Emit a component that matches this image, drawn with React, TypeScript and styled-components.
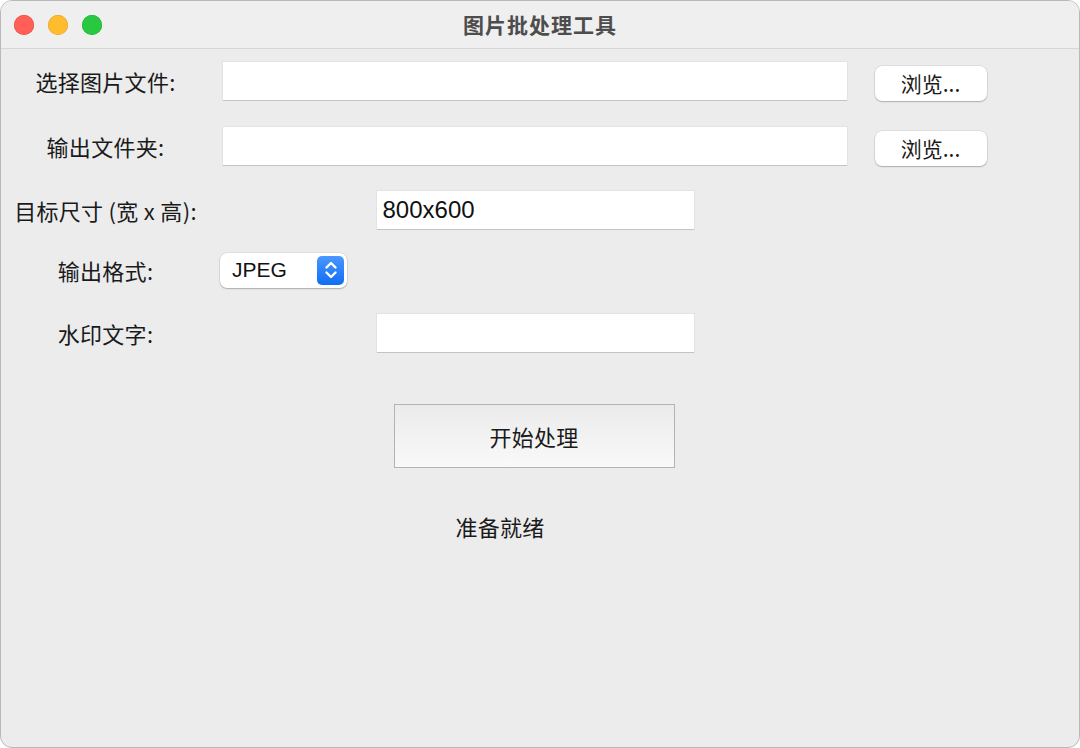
import React from "react";
import styled, { createGlobalStyle } from "styled-components";

const Global = createGlobalStyle`
  html, body { margin: 0; padding: 0; background: #ffffff; }
  body { font-family: "Noto Sans CJK SC", "Noto Sans", sans-serif; }
  * { box-sizing: border-box; }
`;

const Window = styled.div`
  width: 1080px;
  height: 748px;
  border-radius: 12px;
  border: 1px solid #b9b9b9;
  background: #ececec;
  overflow: hidden;
  display: flex;
  flex-direction: column;
`;

const TitleBar = styled.div`
  height: 48px;
  flex: none;
  background: #efefef;
  border-bottom: 1px solid #d6d6d6;
  display: flex;
  align-items: center;
  position: relative;
  padding-left: 13px;
`;

const Lights = styled.div`
  display: flex;
  gap: 14px;
`;

const Light = styled.span<{ $c: string; $b: string }>`
  width: 20px;
  height: 20px;
  border-radius: 50%;
  background: ${(p) => p.$c};
  box-shadow: inset 0 0 0 0.5px ${(p) => p.$b};
`;

const Title = styled.div`
  position: absolute;
  left: 0;
  right: 0;
  text-align: center;
  font-size: 21px;
  font-weight: 700;
  color: #4d4d4d;
  line-height: 1;
  letter-spacing: 1px;
  pointer-events: none;
`;

const Form = styled.div`
  display: grid;
  grid-template-columns: 209px 624px 141px;
  grid-template-rows: 50px 80px 48px 72px 54px;
  column-gap: 13px;
  padding-top: 7px;
  align-items: center;
`;

const Label = styled.div`
  font-size: 22px;
  line-height: 1;
  color: #1a1a1a;
  text-align: center;
  white-space: nowrap;
  letter-spacing: 0.3px;
`;

const Entry = styled.div<{ $narrow?: boolean }>`
  height: 38px;
  background: #ffffff;
  box-shadow: 0 1px 0 #c4c4c4, 0 0 0 1px #e3e3e3;
  width: ${(p) => (p.$narrow ? "317px" : "624px")};
  justify-self: center;
  display: flex;
  align-items: center;
  padding-left: 6px;
  font-family: "Liberation Sans", "Noto Sans CJK SC", sans-serif;
  font-size: 24px;
  color: #111;
`;

const BrowseButton = styled.button`
  justify-self: center;
  width: 112px;
  height: 35px;
  margin-top: 5px;
  border: none;
  border-radius: 7px;
  background: #ffffff;
  box-shadow: 0 1px 1.5px rgba(0, 0, 0, 0.22), 0 0 0 0.5px rgba(0, 0, 0, 0.12);
  font-family: "Noto Sans CJK SC", sans-serif;
  font-size: 21px;
  color: #1a1a1a;
  padding: 0;
  line-height: 1;
`;

const Combo = styled.div`
  justify-self: start;
  margin-left: -3px;
  width: 127px;
  height: 35px;
  background: #ffffff;
  border-radius: 7px;
  box-shadow: 0 1px 1.5px rgba(0, 0, 0, 0.22), 0 0 0 0.5px rgba(0, 0, 0, 0.12);
  display: flex;
  align-items: center;
  justify-content: space-between;
  padding: 0 3px 0 12px;
  font-family: "Liberation Sans", sans-serif;
  font-size: 21px;
  color: #111;
`;

const Stepper = styled.span`
  width: 27px;
  height: 29px;
  border-radius: 5px;
  background: linear-gradient(#4a97ff, #0f6ef5);
  display: flex;
  align-items: center;
  justify-content: center;
`;

const Actions = styled.div`
  display: flex;
  flex-direction: column;
  align-items: center;
`;

const StartButton = styled.button`
  margin-top: 44px;
  margin-right: 12px;
  width: 281px;
  height: 64px;
  border: 1px solid #b3b3b3;
  background: linear-gradient(#ebebeb, #f9f9f9);
  font-family: "Noto Sans CJK SC", sans-serif;
  font-size: 22px;
  letter-spacing: 0.3px;
  color: #1a1a1a;
  padding: 0;
`;

const Status = styled.div`
  margin-top: 47px;
  margin-right: 80px;
  font-size: 22px;
  line-height: 1;
  letter-spacing: 0.3px;
  color: #1a1a1a;
`;

export default function App() {
  return (
    <>
      <Global />
      <Window>
        <TitleBar>
          <Lights>
            <Light $c="#ff5f57" $b="#e14640" />
            <Light $c="#febc2e" $b="#dfa023" />
            <Light $c="#28c840" $b="#1dad2b" />
          </Lights>
          <Title>图片批处理工具</Title>
        </TitleBar>
        <Form>
          <Label>选择图片文件:</Label>
          <Entry />
          <BrowseButton>浏览...</BrowseButton>

          <Label>输出文件夹:</Label>
          <Entry />
          <BrowseButton>浏览...</BrowseButton>

          <Label>目标尺寸 (宽 x 高):</Label>
          <Entry $narrow>800x600</Entry>
          <div />

          <Label>输出格式:</Label>
          <Combo>
            JPEG
            <Stepper>
              <svg width="14" height="20" viewBox="0 0 14 20" fill="none" stroke="#fff" strokeWidth="2.4" strokeLinecap="round" strokeLinejoin="round">
                <path d="M2.5 7.5 L7 3 L11.5 7.5" />
                <path d="M2.5 12.5 L7 17 L11.5 12.5" />
              </svg>
            </Stepper>
          </Combo>
          <div />

          <Label>水印文字:</Label>
          <Entry $narrow />
          <div />
        </Form>
        <Actions>
          <StartButton>开始处理</StartButton>
          <Status>准备就绪</Status>
        </Actions>
      </Window>
    </>
  );
}
